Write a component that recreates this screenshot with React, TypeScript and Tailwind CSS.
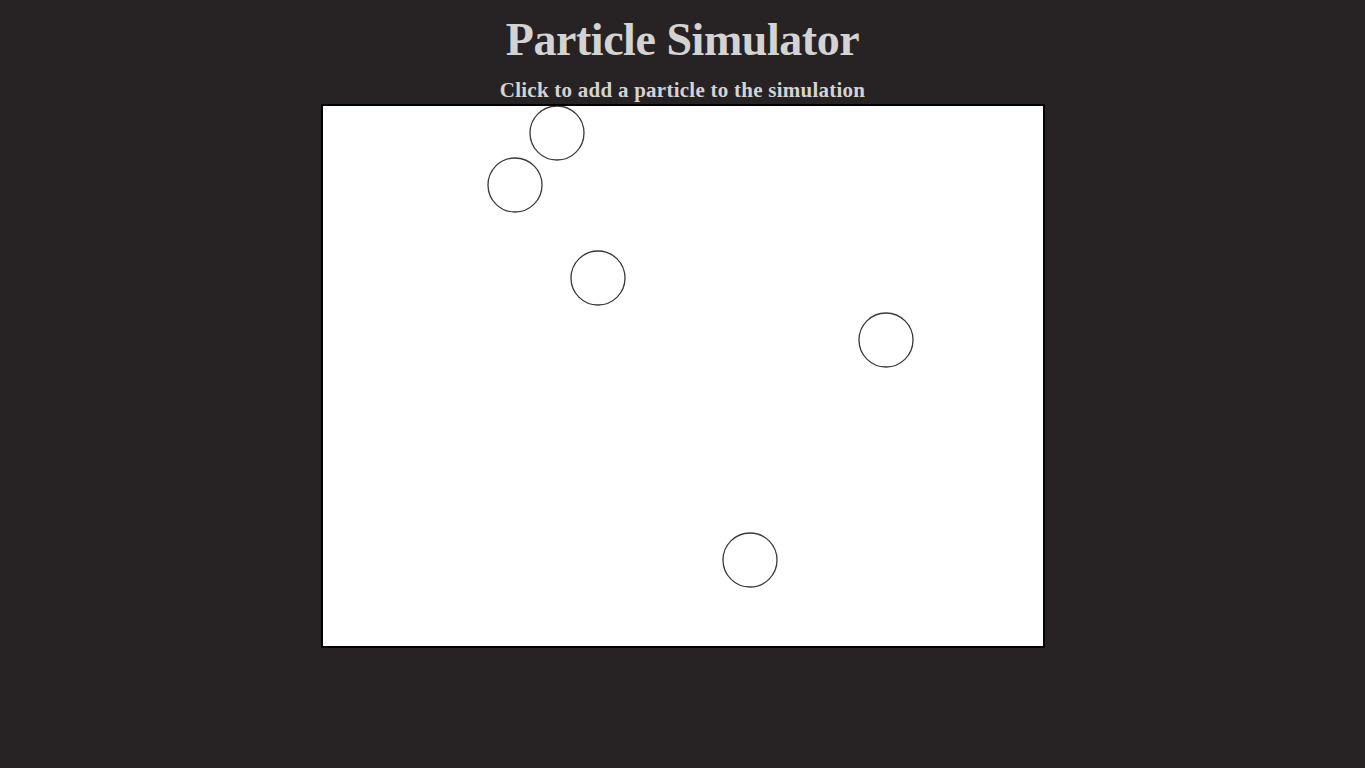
const particles = [
  { x: 234, y: 27 },
  { x: 192, y: 79 },
  { x: 275, y: 172 },
  { x: 563, y: 234 },
  { x: 427, y: 454 },
];

export default function App() {
  return (
    <div
      className="min-h-screen bg-[#272223] flex flex-col items-center pt-[12px] text-[#d3d3d3]"
      style={{ fontFamily: '"Liberation Serif", "Times New Roman", serif' }}
    >
      <h1 className="text-[46px] font-bold leading-[55px] tracking-[-0.45px]">
        Particle Simulator
      </h1>
      <h3 className="mt-[11px] text-[21px] font-bold leading-[24px] tracking-[0.25px]">
        Click to add a particle to the simulation
      </h3>
      <div className="mt-[2px] border-2 border-black bg-white">
        <svg width="720" height="540" viewBox="0 0 720 540" className="block">
          {particles.map((p, i) => (
            <circle
              key={i}
              cx={p.x}
              cy={p.y}
              r={27}
              fill="none"
              stroke="#3a3a3a"
              strokeWidth={1.3}
            />
          ))}
        </svg>
      </div>
    </div>
  );
}
